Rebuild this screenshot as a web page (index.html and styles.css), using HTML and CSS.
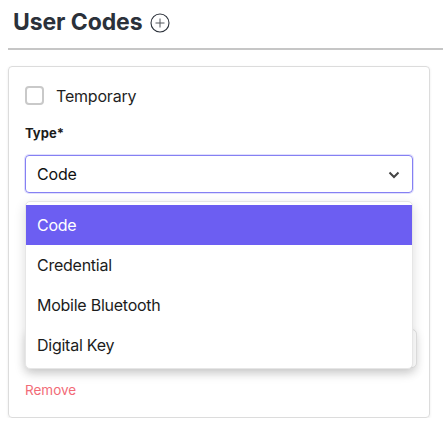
FILE: index.html
```html
<!DOCTYPE html>
<html lang="en">
<head>
<meta charset="utf-8">
<title>User Codes</title>
<link rel="stylesheet" href="styles.css">
</head>
<body>
<div class="page">
  <header class="heading">
    <h2 class="title">User Codes</h2>
    <button class="add-btn" aria-label="Add user code">
      <svg width="20" height="20" viewBox="0 0 20 20">
        <circle cx="10" cy="10" r="9" fill="none" stroke="#2b313a" stroke-width="1.1"/>
        <path d="M10 5.5v9M5.5 10h9" stroke="#55595f" stroke-width="1" fill="none"/>
      </svg>
    </button>
  </header>
  <hr class="divider">
  <section class="card">
    <label class="check-row">
      <span class="checkbox"></span>
      <span class="check-label">Temporary</span>
    </label>
    <div class="field">
      <div class="field-label">Type*</div>
      <div class="select-wrap">
        <div class="select">
          <span>Code</span>
          <svg class="chev" width="12" height="8" viewBox="0 0 12 8">
            <path d="M1.5 1.5L6 6l4.5-4.5" fill="none" stroke="#444" stroke-width="2"/>
          </svg>
        </div>
        <ul class="menu">
          <li class="option active">Code</li>
          <li class="option">Credential</li>
          <li class="option">Mobile Bluetooth</li>
          <li class="option">Digital Key</li>
        </ul>
      </div>
    </div>
    <div class="field hidden-field">
      <div class="under-box"></div>
    </div>
    <a class="remove" href="#">Remove</a>
  </section>
</div>
</body>
</html>
```
FILE: styles.css
```css
* { box-sizing: border-box; }
html, body { margin: 0; padding: 0; background: #fff; }
body {
  font-family: Inter, "Noto Sans", "Liberation Sans", sans-serif;
  color: #1c1c1e;
}
.page { padding: 8px 0 0 8px; }
.heading {
  display: flex;
  align-items: center;
  gap: 8px;
  padding-left: 5px;
  height: 28px;
}
.title {
  margin: 0;
  font-size: 23px;
  font-weight: 700;
  color: #2b313a;
  letter-spacing: -0.1px;
  line-height: 28px;
}
.add-btn {
  border: 0;
  background: none;
  padding: 0;
  display: flex;
  margin-top: 2px;
}
.divider {
  margin: 12px 0 0 0;
  border: 0;
  height: 2px;
  background: #c6c6c6;
}
.card {
  margin-top: 16px;
  width: 422px;
  border: 1px solid #dcdcdc;
  border-radius: 4px;
  box-shadow: 0 1px 3px rgba(0,0,0,0.08);
  padding: 19px 16px 19px 16px;
  display: flex;
  flex-direction: column;
}
.check-row {
  display: flex;
  align-items: center;
  gap: 12px;
  height: 19px;
}
.checkbox {
  width: 19px;
  height: 19px;
  border: 2px solid #c9c9c9;
  border-radius: 4px;
  background: #fff;
}
.check-label { font-size: 16px; color: #1f1f1f; letter-spacing: -0.2px; }
.field { margin-top: 20px; }
.field-label {
  font-size: 13px;
  font-weight: 700;
  color: #1c1c1c;
  line-height: 16px;
  margin-bottom: 14px;
}
.select-wrap { position: relative; }
.select {
  height: 38px;
  border: 1px solid #8580f3;
  border-radius: 4px;
  box-shadow: 0 0 0 1px rgba(133,128,243,0.25);
  display: flex;
  align-items: center;
  justify-content: space-between;
  padding: 0 12px 0 11px;
  font-size: 16px;
  letter-spacing: -0.2px;
  color: #111;
}
.chev { margin-top: 1px; }
.menu {
  position: absolute;
  top: 46px;
  left: 0;
  right: 0;
  margin: 0;
  padding: 3px 0 3px;
  list-style: none;
  background: #fff;
  border: 1px solid #e6e6e6;
  border-radius: 5px;
  box-shadow: 0 4px 12px rgba(0,0,0,0.14);
  z-index: 2;
}
.option {
  height: 40px;
  display: flex;
  align-items: center;
  padding: 0 11px;
  font-size: 16px;
  letter-spacing: -0.25px;
  color: #1c1c1c;
}
.option.active { background: #6c5ef2; color: #fff; }
.hidden-field { margin-top: 136px; }
.under-box {
  height: 39px;
  margin-right: -4px;
  border: 1px solid #e2e2e2;
  border-radius: 5px;
  box-shadow: 0 4px 10px rgba(0,0,0,0.12);
  background: #fff;
}
.remove {
  margin-top: 14px;
  font-size: 13.5px;
  line-height: 16px;
  color: #f26b77;
  text-decoration: none;
}
```
